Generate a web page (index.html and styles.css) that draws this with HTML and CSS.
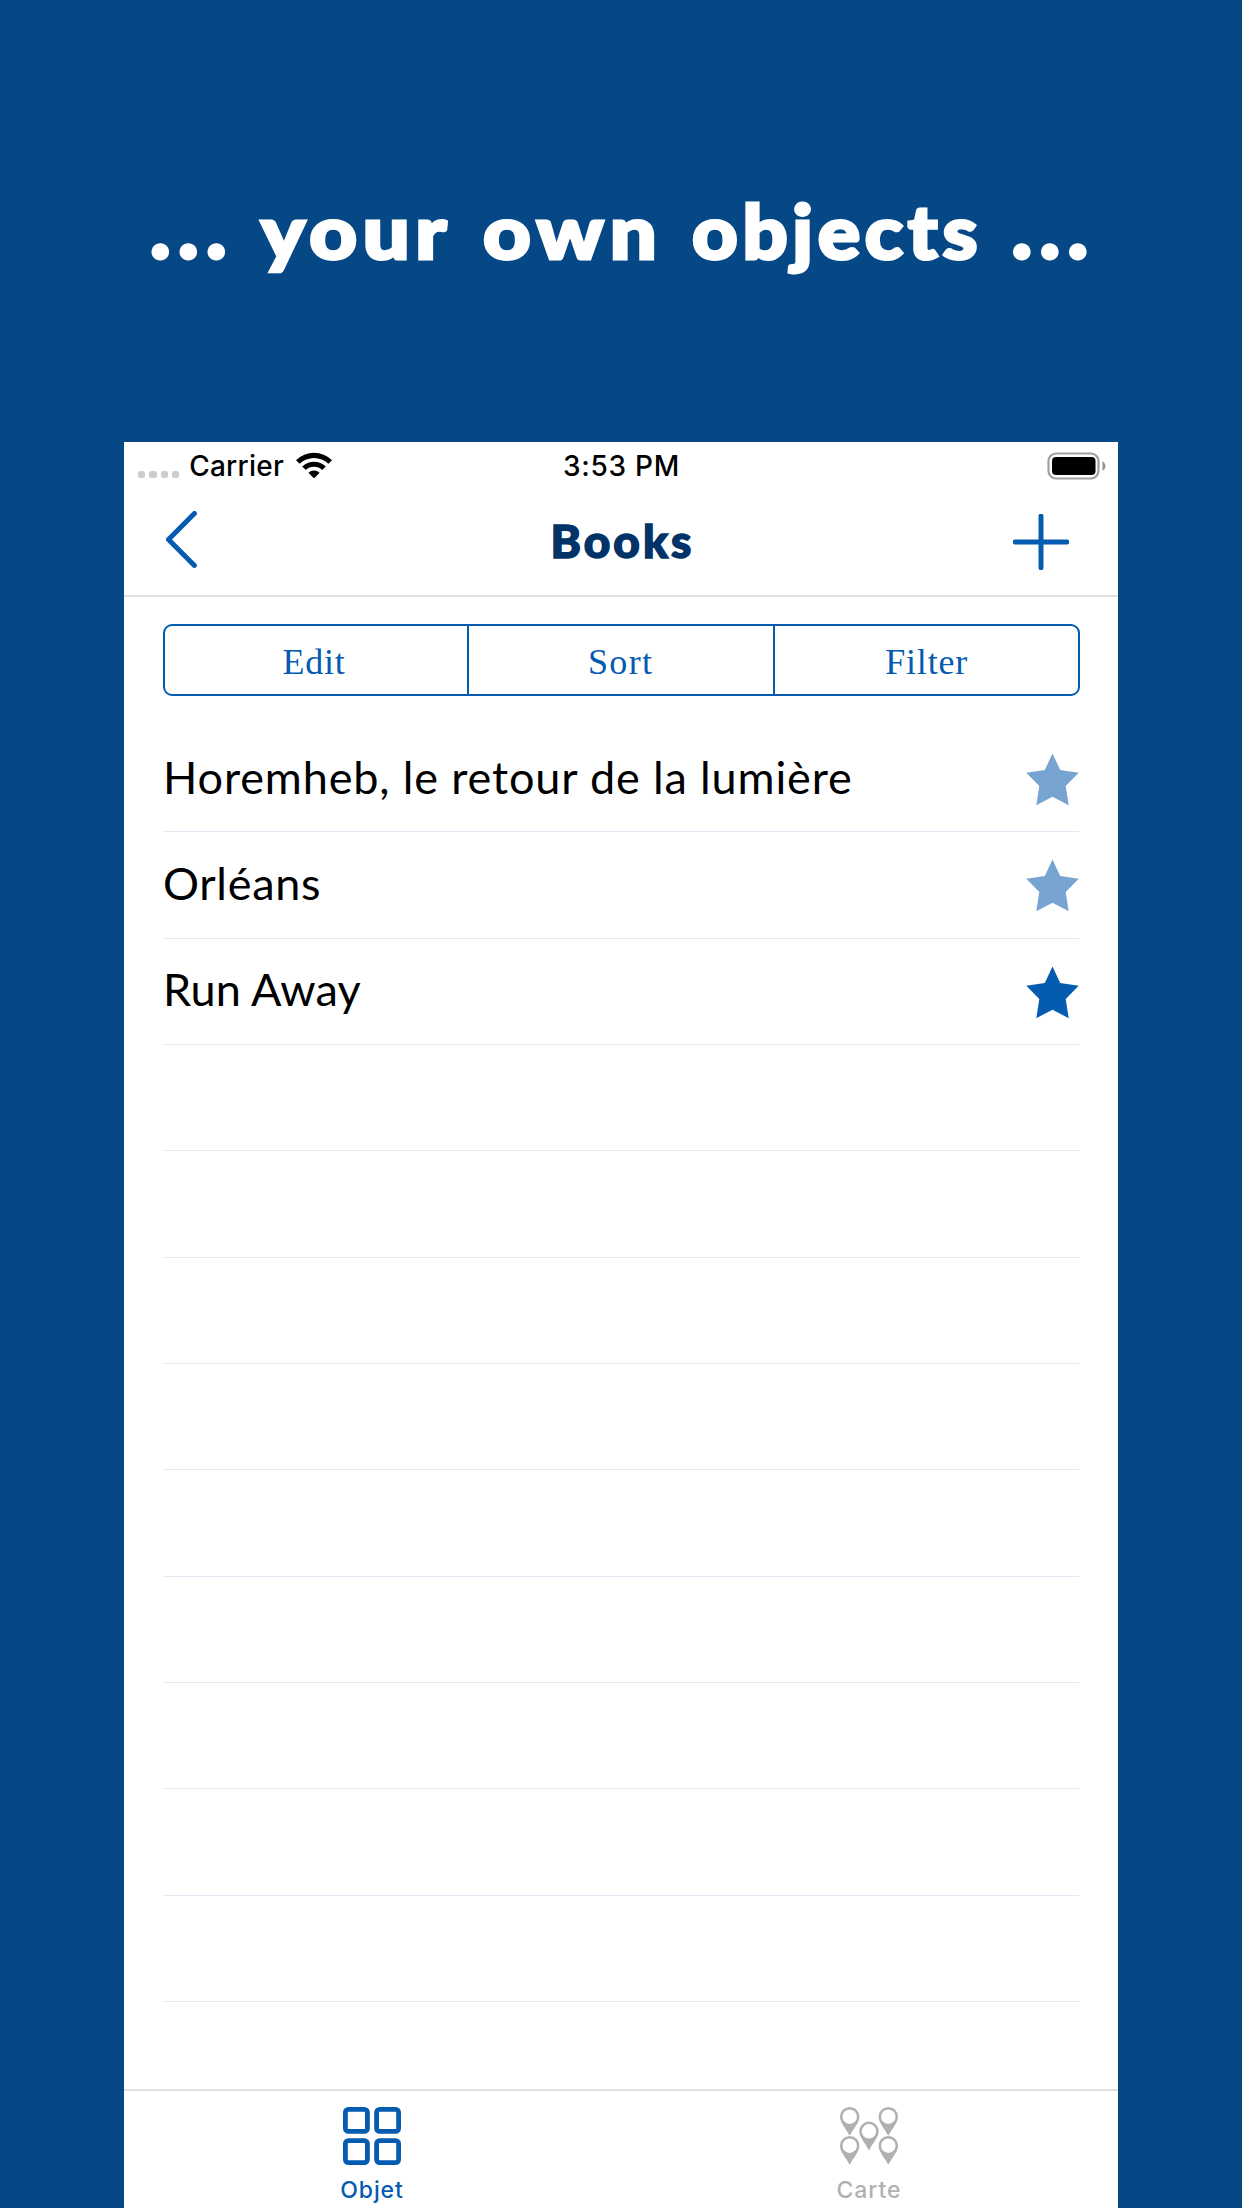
FILE: index.html
```html
<!DOCTYPE html>
<html lang="en">
<head>
<meta charset="utf-8">
<title>Books</title>
<link rel="stylesheet" href="styles.css">
</head>
<body>
<h1 class="headline"><span class="w-dots">...</span><span class="w-your">your</span><span class="w-own">own</span><span class="w-objects">objects</span><span class="w-dots w-last">...</span></h1>
<main class="phone">
  <div class="status">
    <div class="carrier">
      <span class="signal"><i></i><i></i><i></i><i></i></span>
      <span class="carrier-name">Carrier</span>
      <svg class="wifi" width="36" height="27" viewBox="0 0 36 27"><path d="M0 8.200A25.700 25.700 0 0 1 36 8.200L32.400 11.800A20.600 20.600 0 0 0 3.600 11.800ZM6.200 14.500A17 17 0 0 1 29.800 14.500L26.200 18.100A11.900 11.900 0 0 0 9.800 18.100ZM12.400 20.800A8.100 8.100 0 0 1 23.600 20.800L18.700 25.700Q18 26.400 17.300 25.700Z"/></svg>
    </div>
    <span class="time">3:53 PM</span>
    <svg class="battery" width="60" height="28" viewBox="0 0 60 28"><rect x="1.500" y="1.500" width="50" height="25" rx="7.500" fill="none" stroke="#a0a0a0" stroke-width="2.200"/><rect x="5" y="5" width="43.500" height="18" rx="4"/><path d="M55.500 9Q58.500 11 58.500 14T55.500 19Z" fill="#909090"/></svg>
  </div>
  <header class="nav">
    <svg class="back" width="31" height="57" viewBox="0 0 31 57"><path d="M28.400 2.500L2.500 28.400L28.400 54.400"/></svg>
    <h2 class="title">Books</h2>
    <svg class="add" width="56" height="56" viewBox="0 0 56 56"><path d="M28 2.200V53.800M2.200 28H53.800"/></svg>
  </header>
  <div class="segments"><span>Edit</span><span class="sort">Sort</span><span>Filter</span></div>
  <ul class="list">
    <li><span class="name-long">Horemheb, le retour de la lumière</span><svg class="star pale" width="53" height="53" viewBox="0 0 53 53"><path d="M26.500 .5L34.200 17L52.700 19.800L39.700 33L42.700 52.200L26.500 43.700L10.300 52.200L13.300 33L.3 19.800L18.800 17Z"/></svg></li>
    <li><span class="name-orl">Orléans</span><svg class="star pale" width="53" height="53" viewBox="0 0 53 53"><path d="M26.500 .5L34.200 17L52.700 19.800L39.700 33L42.700 52.200L26.500 43.700L10.300 52.200L13.300 33L.3 19.800L18.800 17Z"/></svg></li>
    <li><span class="name-run">Run Away</span><svg class="star" width="53" height="53" viewBox="0 0 53 53"><path d="M26.500 .5L34.200 17L52.700 19.800L39.700 33L42.700 52.200L26.500 43.700L10.300 52.200L13.300 33L.3 19.800L18.800 17Z"/></svg></li>
    <li></li><li></li><li></li><li></li><li></li><li></li><li></li><li></li><li></li>
  </ul>
  <nav class="tabs">
    <a class="tab active">
      <svg width="58" height="58" viewBox="0 0 58 58" fill="none" stroke="#055bb0" stroke-width="4.800"><rect x="2.400" y="2.400" width="22" height="22" rx="3"/><rect x="33.600" y="2.400" width="22" height="22" rx="3"/><rect x="2.400" y="33.600" width="22" height="22" rx="3"/><rect x="33.600" y="33.600" width="22" height="22" rx="3"/></svg>
      <span>Objet</span>
    </a>
    <a class="tab">
      <svg width="58" height="58" viewBox="0 0 58 58" fill="#b0b0b0" fill-rule="evenodd"><defs><path id="pin" d="M9.700 0A9.700 9.700 0 0 1 19.400 9.700C19.400 15.500 13.500 21.500 9.700 28.800C5.900 21.500 0 15.500 0 9.700A9.700 9.700 0 0 1 9.700 0ZM9.700 2.500A7.200 7.200 0 1 0 9.700 16.900A7.200 7.200 0 1 0 9.700 2.500Z"/></defs><use href="#pin"/><use href="#pin" x="38.600"/><use href="#pin" x="19.300" y="14.600"/><use href="#pin" y="29"/><use href="#pin" x="38.600" y="29"/></svg>
      <span>Carte</span>
    </a>
  </nav>
</main>
</body>
</html>
```
FILE: styles.css
```css
* { box-sizing: border-box; margin: 0; padding: 0; }
body { width: 1242px; height: 2208px; overflow: hidden; background: #064886; font-family: Inter, "Liberation Sans", sans-serif; display: flex; flex-direction: column; align-items: center; }
.headline { height: 442px; width: 100%; display: flex; align-items: baseline; padding: 177px 0 0 149px; font: 900 74px/90px Lato, sans-serif; color: #fff; white-space: nowrap; -webkit-text-stroke: 3px #fff; }
.headline span { transform-origin: left; }
.w-dots { font-size: 95px; letter-spacing: 5.400px; -webkit-text-stroke-width: 2px; }
.w-your { width: 198px; margin-left: 28px; letter-spacing: 5px; transform: scaleX(1.12); }
.w-own { width: 187.400px; margin-left: 24px; letter-spacing: 5.600px; transform: scaleX(1.12); }
.w-objects { width: 292px; margin-left: 21.500px; letter-spacing: 4.400px; transform: scaleX(1.07); }
.w-last { margin-left: 26.500px; }
.phone { width: 994px; height: 1766px; background: #fff; display: flex; flex-direction: column; }
.status { height: 48px; display: grid; grid-template-columns: 1fr auto 1fr; align-items: center; padding: 0 11px 0 14px; font-size: 28px; font-weight: 500; color: #000; }
.carrier { display: flex; align-items: center; letter-spacing: .250px; }
.time { margin-right: 2px; letter-spacing: .750px; }
.signal { display: flex; gap: 4px; margin: 17px 10px 0 0; }
.signal i { width: 7.300px; height: 7.300px; border-radius: 2.500px; background: #ccc; }
.wifi { margin: 0 0 1px 12px; }
.battery { justify-self: end; margin-bottom: 1px; }
.nav { height: 107px; display: grid; grid-template-columns: 1fr auto 1fr; align-items: center; border-bottom: 2px solid #e0e0e0; padding: 0 49px 0 42px; }
.title { margin: 0 0 3px 10px; font: 900 46px/56px Lato, sans-serif; letter-spacing: 3px; color: #023368; -webkit-text-stroke: 1.500px #023368; }
.back, .add { fill: none; stroke: #055bb0; stroke-width: 5; stroke-linecap: round; stroke-linejoin: round; }
.back { margin-bottom: 6px; }
.add { justify-self: end; margin-bottom: 2px; }
.segments { height: 72px; margin: 27px 38px 0 39px; border: 2px solid #055bb0; border-radius: 9px; display: grid; grid-template-columns: 302px 306.300px 1fr; font: 36px/73px "Liberation Serif", serif; letter-spacing: .800px; color: #055bb0; text-align: center; }
.segments span { height: 68px; padding-right: 4px; }
.segments span + span { border-left: 2px solid #055bb0; padding-right: 0; }
.segments .sort { letter-spacing: 1.300px; padding-right: 1px; }
.list { list-style: none; margin: 30px 39px 0; font: 400 45px/54px Lato, sans-serif; color: #000; }
.list li { height: 106.340px; border-bottom: 1px solid #dfeaf5; display: flex; justify-content: space-between; align-items: center; }
.list span { margin: 0 0 4px; }
.name-long { letter-spacing: .860px; }
.name-orl { letter-spacing: .700px; }
.name-run { letter-spacing: .150px; }
.star { position: relative; top: 1px; fill: #055bb0; }
.pale { fill: #77a4d1; }
.tabs { margin-top: auto; height: 119px; border-top: 2px solid #e0e0e0; display: flex; font-size: 23px; line-height: 28px; font-weight: 500; letter-spacing: .900px; color: #b0b0b0; }
.tab { flex: 1; display: flex; flex-direction: column; align-items: center; gap: 11px; padding: 16px 1px 0 0; }
.active { color: #055bb0; }
```
